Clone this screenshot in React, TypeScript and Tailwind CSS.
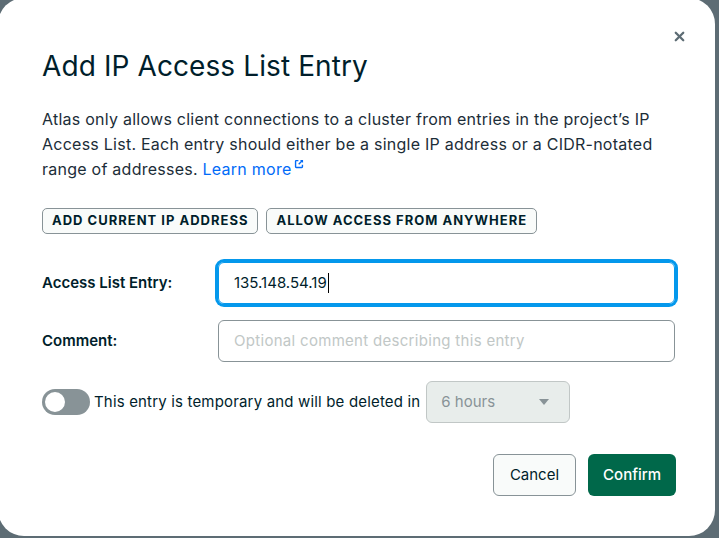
import { X } from "lucide-react";

const font = { fontFamily: "Inter, 'Noto Sans', sans-serif" };

const OpenNewTabIcon = () => (
  <svg viewBox="0 0 16 16" className="ml-[2px] inline-block h-[10px] w-[10px] -translate-y-[6px] align-baseline" fill="none">
    <path d="M7 2.5H3.5a1 1 0 0 0-1 1v9a1 1 0 0 0 1 1h9a1 1 0 0 0 1-1V9" stroke="#016bf8" strokeWidth="2.2" />
    <path d="M9.5 1.5h5v5z" fill="#016bf8" />
    <path d="M13.5 2.5 7.5 8.5" stroke="#016bf8" strokeWidth="2.4" />
  </svg>
);

const OutlineButton = ({ children }: { children: React.ReactNode }) => (
  <button className="flex h-[26px] items-center rounded-[5px] border border-[#889397] bg-[#f9fbfa] px-[9px] text-[13px] font-bold uppercase tracking-[1px] text-[#001e2b]">
    {children}
  </button>
);

const Toggle = () => (
  <div className="flex h-[26px] w-[48px] items-center rounded-full bg-[#889397] p-[1px]">
    <div className="h-[24px] w-[24px] rounded-full border-[2px] border-[#889397] bg-white" />
  </div>
);

export default function App() {
  return (
    <div className="h-[538px] w-[719px] overflow-hidden bg-[#5d6c74]" style={font}>
      <div className="relative -ml-[2px] -mt-[2px] h-[538px] w-[717px] rounded-[26px] bg-white pl-[44px] pr-[39px] pt-[50px] text-[#001e2b]">
        <button className="absolute right-[28px] top-[31px] text-[#5d6c74]">
          <X size={15} strokeWidth={3.6} />
        </button>

        <h1 className="text-[28px] font-normal leading-[36px] tracking-[0.1px]">Add IP Access List Entry</h1>

        <p className="mt-[23px] w-[670px] text-[16px] leading-[25px] tracking-[0.25px] text-[#1c2d38]">
          Atlas only allows client connections to a cluster from entries in the project’s IP
          <br />
          Access List. Each entry should either be a single IP address or a CIDR-notated
          <br />
          range of addresses. <a className="text-[#016bf8]">Learn more</a>
          <OpenNewTabIcon />
        </p>

        <div className="mt-[26px] flex gap-[8px]">
          <OutlineButton>Add current IP address</OutlineButton>
          <OutlineButton>Allow access from anywhere</OutlineButton>
        </div>

        <div className="mt-[28px] flex items-center">
          <label className="w-[176px] shrink-0 text-[15px] font-semibold">Access List Entry:</label>
          <div className="mr-[1px] flex h-[42px] flex-1 items-center rounded-[6px] border border-[#0498ec] pl-[15px] text-[15px] ring-[3px] ring-[#0498ec]">
            135.148.54.19
            <span className="ml-[1px] h-[20px] w-[1px] bg-black" />
          </div>
        </div>

        <div className="mt-[16px] flex items-center">
          <label className="w-[176px] shrink-0 text-[15px] font-semibold">Comment:</label>
          <div className="mr-[1px] flex h-[42px] flex-1 items-center rounded-[6px] border border-[#889397] pl-[15px] text-[15px] tracking-[0.3px] text-[#c1c7c6]">
            Optional comment describing this entry
          </div>
        </div>

        <div className="mt-[19px] flex items-center">
          <Toggle />
          <span className="ml-[4px] text-[15px] tracking-[0.17px]">This entry is temporary and will be deleted in</span>
          <div className="ml-[6px] flex h-[42px] w-[144px] items-center justify-between rounded-[6px] border border-[#c1c7c6] bg-[#e8edeb] pl-[14px] pr-[20px] text-[15px] text-[#889397]">
            6 hours
            <svg viewBox="0 0 10 6" className="h-[6px] w-[10px]">
              <path d="M0 0h10L5 6z" fill="#889397" />
            </svg>
          </div>
        </div>

        <div className="mt-[31px] flex justify-end gap-[12px]">
          <button className="h-[42px] rounded-[6px] border border-[#889397] bg-[#f9fbfa] px-[16px] text-[15px] text-[#001e2b]">
            Cancel
          </button>
          <button className="h-[42px] rounded-[6px] bg-[#00684a] px-[15px] text-[15px] font-medium text-white">
            Confirm
          </button>
        </div>
      </div>
    </div>
  );
}
